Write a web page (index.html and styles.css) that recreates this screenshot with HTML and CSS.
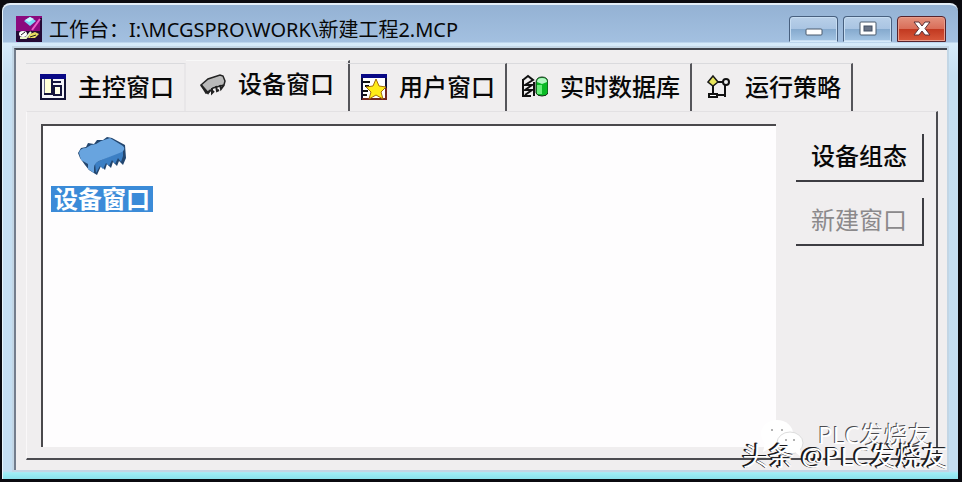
FILE: index.html
```html
<!DOCTYPE html>
<html lang="zh-CN">
<head>
<meta charset="utf-8">
<title>工作台</title>
<link rel="stylesheet" href="styles.css">
</head>
<body>
<main class="window">
  <header class="titlebar">
    <svg class="app-icon" viewBox="0 0 26 26" aria-hidden="true">
      <path fill="#8b0a7e" d="M0 0h26v26H0z"/>
      <path fill="#250b35" d="M0 15h25v10H0zM24 2h2v24H1v-2h23z"/>
      <path fill="#79d9f7" d="M8 5l6-4 6 4-6 5z"/>
      <path fill="#c9f6ff" d="M9 4l5-3 4 2-5 3z"/>
      <path fill="none" stroke="#f05ac8" stroke-width="2" d="M24 3l-8 11"/>
      <ellipse cx="7" cy="18" rx="4" ry="3" fill="#fff"/>
      <path fill="none" stroke="#e8f7c8" stroke-width="2" d="M4 22h6l5-6"/>
      <path fill="#e6dc62" d="M14 18l5-2 4 2-4 4h-7z"/>
      <path fill="none" stroke="#222" d="M5 19l4-3M14 21l6-2"/>
    </svg>
    <h1 class="title">工作台：I:\MCGSPRO\WORK\新建工程2.MCP</h1>
    <div class="controls">
      <button class="control" aria-label="最小化"><svg viewBox="0 0 26 20"><rect x="5" y="10" width="16" height="6" rx="1" fill="#fff" stroke="#4b5a6c"/></svg></button>
      <button class="control" aria-label="最大化"><svg viewBox="0 0 26 20"><rect x="5" y="3" width="16" height="13" rx="1" fill="#fff" stroke="#4b5a6c"/><rect x="9" y="7" width="8" height="5" fill="#687386" stroke="#435064"/></svg></button>
      <button class="control close" aria-label="关闭"><svg viewBox="0 0 26 20"><path d="M5 3h5l3 4 3-4h5l-5 6.500 5 6.500h-5l-3-4-3 4H5l5-6.500z" fill="#fff" stroke="#593137"/></svg></button>
    </div>
  </header>
  <section class="client">
    <div class="tabs" role="tablist">
      <button class="tab first" role="tab" aria-selected="false">
        <svg class="icon" viewBox="0 0 26 26"><path fill="#f4f4fa" stroke="#111134" stroke-width="2" d="M1 1h24v24H1z"/><path fill="#090986" d="M0 0h26v5H0z"/><path fill="#ffffd8" d="M5 5h6v15H5z"/><path fill="none" stroke="#6a6a86" d="M4.500 5v14"/><path fill="none" stroke="#16163d" stroke-width="2" d="M4 20h8V5M12 8h9"/><path fill="#ffffe8" stroke="#16163d" stroke-width="2" d="M14 12h7v9h-7z"/></svg>
        <span>主控窗口</span>
      </button>
      <button class="tab selected" role="tab" aria-selected="true">
        <svg class="icon" viewBox="0 0 26 26"><path fill="#b9b9b9" stroke="#222" stroke-width="1.500" d="M1 14L8 8l12-4 3 1 2 5-1 4-11 3-4 4-3 1z"/><path fill="none" stroke="#222" stroke-width="2" d="M1 14l7 8 2-3M12 17v5l2-2M16 15l1 5 2-1M20 14l1 4 3-4"/></svg>
        <span>设备窗口</span>
      </button>
      <button class="tab" role="tab" aria-selected="false">
        <svg class="icon" viewBox="0 0 26 26"><path fill="#fff" stroke="#111134" stroke-width="2" d="M1 1h24v24H1z"/><path fill="#090986" d="M0 0h26v4H0z"/><path fill="none" stroke="#111" stroke-width="2" d="M2 8h7M4 12h4M2 17h5M2 21h4"/><path fill="none" stroke="#71271f" stroke-width="2" d="M1 25h24V14"/><path fill="#ffec18" stroke="#a46c09" d="M15 5l3 7 7 1-5 5 2 7-7-4-7 4 2-7-5-5 7-1z"/></svg>
        <span>用户窗口</span>
      </button>
      <button class="tab" role="tab" aria-selected="false">
        <svg class="icon" viewBox="0 0 26 26"><path fill="none" stroke="#111" stroke-width="2" d="M1 5v17h8M1 6l5-4 5 4-8 5h7l-7 5h7l-7 5M12 8v14"/><path fill="#0aba25" stroke="#142d18" d="M14 9q0-6 6-6t6 6v10q-1 3-6 3t-6-3z"/><path fill="#b3f7c2" d="M15 8q0-4 5-4t5 4l-5 2z"/><path fill="#67ee79" d="M15 11h5v9h-5z"/></svg>
        <span>实时数据库</span>
      </button>
      <button class="tab" role="tab" aria-selected="false">
        <svg class="icon" viewBox="0 0 26 26"><path fill="none" stroke="#111" stroke-width="2" d="M6 11v10M11 8h8M18 8v15M8 21h10"/><path fill="#e9e65b" stroke="#191919" stroke-width="1.500" d="M6 2l5 6-5 4-5-4z"/><path fill="#fff" stroke="#111" stroke-width="2" d="M2 20h8v3H2z"/><circle cx="19" cy="8" r="3" fill="#eee" stroke="#111" stroke-width="2"/></svg>
        <span>运行策略</span>
      </button>
    </div>
    <div class="panel" role="tabpanel">
      <div class="list">
        <button class="item">
          <svg class="device" viewBox="0 0 50 42" aria-hidden="true"><path fill="#23466f" d="M1 17l3-5 5-1 2-4 6 1 3-4 6 0 4-3 5 1 13 7 1 13-3 7-4-4-2 5-4-4-2 6-4-4-2 6-4-4-4 9-8-5-4-5-5-7z"/><path fill="#3c7fc4" d="M18 27l28-13v6l-2 6-3-4-3 6-3-4-3 6-3-3-3 6-3-3-4 7z"/><path fill="#68a4df" d="M2 17q1-5 7-5l5-3 5-1 5-3 9-3 13 8q3 3-1 6L22 25q-5 2-5 7v5l-6-4v-5l-7-4z"/></svg>
          <span class="item-name">设备窗口</span>
        </button>
      </div>
      <div class="actions">
        <button class="action">设备组态</button>
        <button class="action" disabled>新建窗口</button>
      </div>
    </div>
  </section>
  <aside class="watermark">
    <svg class="chat" viewBox="0 0 44 38" aria-hidden="true"><ellipse cx="17" cy="15" rx="16" ry="14" fill="#fff"/><path fill="#fff" d="M5 24l-2 9 9-5z"/><ellipse cx="30" cy="24" rx="13" ry="11" fill="#fff" stroke="#ddd"/><path d="M34 32l7 6-1-8z" fill="#fff"/><g fill="#999"><circle cx="12" cy="11" r="1"/><circle cx="22" cy="11" r="1"/><circle cx="26" cy="21" r="1"/><circle cx="34" cy="21" r="1"/></g></svg>
    <span class="mark-back">PLC发烧友</span>
    <span class="mark-front">头条 @PLC发烧友</span>
  </aside>
</main>
</body>
</html>
```
FILE: styles.css
```css
* { box-sizing: border-box; }
body {
  margin: 0;
  padding: 3px 4px 3px 2px;
  height: 100vh;
  background: #0b0b10;
  color: #080808;
  font-family: "Noto Sans", "Noto Sans CJK SC", sans-serif;
}
button {
  margin: 0;
  padding: 0;
  border: 0;
  background: none;
  color: inherit;
  font: inherit;
}
svg { display: block; flex: none; }
.window {
  position: relative;
  display: flex;
  flex-direction: column;
  height: 100%;
  padding: 0 11px 9px 11px;
  border-top: 2px solid #e4eff9;
  border-left: 1px solid #e8f5fc;
  border-radius: 8px 8px 0 0;
  background: linear-gradient(#94b2d4, #a3c0e0 37px, #d6ebfa 38px, #c6dff2 70px, #c4def2 calc(100% - 8px), #a0eef5 calc(100% - 6px), #8be2ed);
}
.titlebar {
  display: flex;
  flex: none;
  height: 43px;
  padding: 11px 1px 0 2px;
}
.app-icon { width: 26px; height: 26px; }
.title {
  flex: 1;
  min-width: 0;
  margin: 0 0 0 7px;
  overflow: hidden;
  font-size: 20px;
  font-weight: 400;
  line-height: 28px;
  white-space: nowrap;
}
.controls { display: flex; gap: 5px; height: 26px; }
.control {
  display: flex;
  align-items: center;
  justify-content: center;
  width: 49px;
  height: 26px;
  border: 1px solid #48607f;
  border-bottom-color: #d7ebfa;
  border-radius: 4px 4px 0 0;
  background: linear-gradient(#b9d0e9, #a9c4e2 50%, #86aace 52%, #a4c5e4);
  box-shadow: inset 0 0 0 1px #c7ddf2;
}
.control svg { width: 26px; height: 20px; }
.close {
  border-color: #57232c;
  background: linear-gradient(#e3917d, #d96d58 50%, #c23a21 52%, #d8583b);
  box-shadow: inset 0 0 0 1px #e99d8b;
}
.client {
  display: flex;
  flex: 1;
  flex-direction: column;
  min-height: 0;
  padding: 10px 9px 10px 10px;
  border-top: 2px solid #41464f;
  border-left: 2px solid #737d8c;
  background: #f0eeef;
  box-shadow: 0 0 0 2px #c3d6e5;
}
.tabs { display: flex; flex: none; align-items: flex-end; height: 51px; }
.tab {
  display: flex;
  align-items: center;
  gap: 12px;
  height: 48px;
  padding: 0 10px 2px 15px;
  border-top: 1px solid #dadadd;
  border-right: 2px solid #55555a;
  font-size: 24px;
  font-weight: 500;
  line-height: 32px;
  white-space: nowrap;
}
.icon { width: 26px; height: 26px; }
.first { padding-left: 14px; border-right-color: #e8e6e8; }
.selected {
  height: 51px;
  margin-right: -4px;
  padding: 0 14px 4px;
  border-top-color: #f8f8f8;
}
.panel {
  display: flex;
  flex: 1;
  gap: 20px;
  min-height: 0;
  padding: 12px 12px 11px 14px;
  border-top: 1px solid #e3e1e3;
  border-right: 2px solid #4b4b50;
  border-bottom: 2px solid #4b4b50;
  border-left: 1px solid #faf8f9;
}
.list {
  flex: 1;
  padding: 8px;
  border-top: 2px solid #4a494c;
  border-left: 2px solid #4a494c;
  background: #fefdfe;
}
.item { display: flex; flex-direction: column; align-items: center; gap: 8px; padding-top: 2px; }
.device { width: 50px; height: 42px; }
.item-name {
  padding: 0 3px;
  background: #3b8bd8;
  color: #fff;
  font-size: 24px;
  font-weight: 700;
  line-height: 26px;
}
.actions { display: flex; flex: none; flex-direction: column; gap: 16px; width: 128px; padding-top: 10px; }
.action {
  height: 48px;
  padding-bottom: 2px;
  border-right: 2px solid #3d3d42;
  border-bottom: 2px solid #3d3d42;
  font-size: 24px;
  font-weight: 500;
  line-height: 32px;
}
.action:disabled { color: #8b898b; font-weight: 400; }
.watermark {
  position: absolute;
  right: 10px;
  bottom: 6px;
  display: grid;
  width: 208px;
  height: 54px;
  color: #fff;
  line-height: 32px;
  white-space: nowrap;
  pointer-events: none;
}
.watermark > * { grid-area: 1 / 1; }
.chat { width: 44px; height: 38px; margin-left: 20px; }
.mark-back {
  justify-self: end;
  margin-right: 16px;
  font-size: 24px;
  text-shadow: -1px -1px 0 #4b4b4f;
}
.mark-front {
  align-self: end;
  justify-self: end;
  font-size: 26px;
  line-height: 34px;
  text-shadow: -1px -1px 0 #18181b, -2px -1px 0 #18181b, -1px 0 0 #18181b;
}
```
